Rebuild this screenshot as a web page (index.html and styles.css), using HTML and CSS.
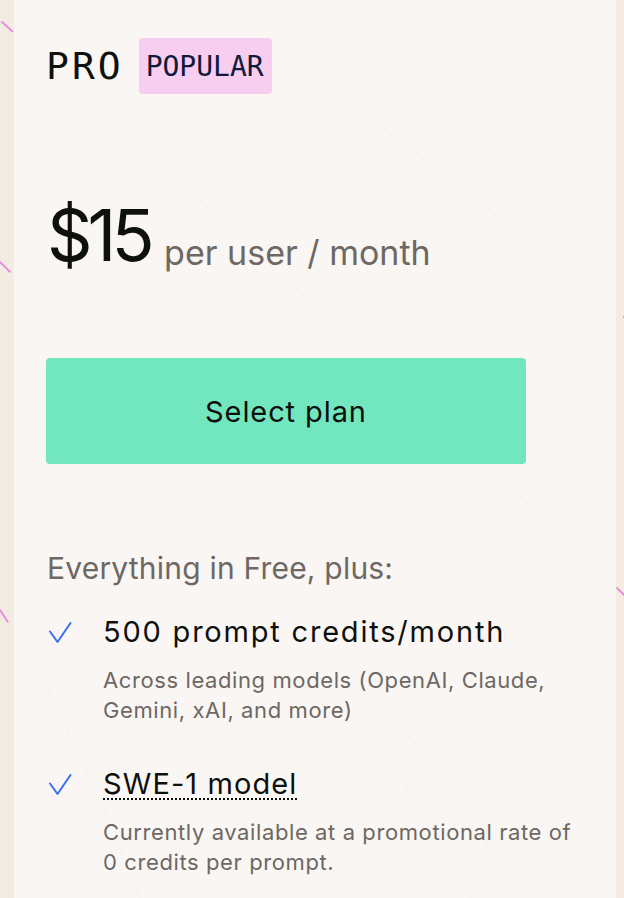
FILE: index.html
```html
<!DOCTYPE html>
<html lang="en">
<head>
<meta charset="utf-8">
<title>Pro plan</title>
<link rel="stylesheet" href="styles.css">
</head>
<body>
<div class="page">
  <svg class="deco" width="624" height="898" viewBox="0 0 624 898" aria-hidden="true">
    <g stroke="#e98ee0" stroke-width="2" stroke-linecap="round" fill="none" stroke-dasharray="14 30">
      <path d="M2 22 C 200 200, 420 400, 640 610"/>
      <path d="M205 -4 C 300 70, 420 150, 640 330"/>
      <path d="M0 262 C 120 380, 260 520, 470 898"/>
      <path d="M0 610 C 60 700, 100 800, 140 898"/>
      <path d="M380 700 C 430 760, 480 830, 520 898"/>
    </g>
  </svg>
  <main class="card">
    <header class="plan-head">
      <h2 class="plan-name">PRO</h2>
      <span class="badge">POPULAR</span>
    </header>
    <div class="price-row">
      <span class="price">$15</span>
      <span class="per">per user / month</span>
    </div>
    <button class="select-btn" type="button">Select plan</button>
    <p class="intro">Everything in Free, plus:</p>
    <ul class="features">
      <li class="feature">
        <svg class="check" width="24" height="22" viewBox="0 0 24 22" aria-hidden="true"><path d="M2 9.5 L9.5 20 L22.5 1" fill="none" stroke="#3a6ff6" stroke-width="2" stroke-linecap="round" stroke-linejoin="round"/></svg>
        <div class="feature-body">
          <div class="feature-title">500 prompt credits/month</div>
          <div class="feature-desc">Across leading models (OpenAI, Claude, Gemini, xAI, and more)</div>
        </div>
      </li>
      <li class="feature">
        <svg class="check" width="24" height="22" viewBox="0 0 24 22" aria-hidden="true"><path d="M2 9.5 L9.5 20 L22.5 1" fill="none" stroke="#3a6ff6" stroke-width="2" stroke-linecap="round" stroke-linejoin="round"/></svg>
        <div class="feature-body">
          <div class="feature-title"><span class="dotted">SWE-1 model</span></div>
          <div class="feature-desc">Currently available at a promotional rate of 0 credits per prompt.</div>
        </div>
      </li>
    </ul>
  </main>
</div>
</body>
</html>
```

FILE: styles.css
```css
* { box-sizing: border-box; }
html, body { margin: 0; padding: 0; }
body {
  background: #f4ece0;
  font-family: "Inter", "DejaVu Sans", sans-serif;
  color: #0e100d;
  width: 624px;
  height: 898px;
  overflow: hidden;
}
.page {
  position: relative;
  width: 624px;
  height: 898px;
}
.deco {
  position: absolute;
  left: 0;
  top: 0;
  z-index: 0;
}
.card {
  position: relative;
  z-index: 1;
  margin-left: 14px;
  width: 602px;
  height: 898px;
  background: rgba(250, 247, 243, 0.95);
  padding: 38px 0 0 33px;
}
.plan-head {
  display: flex;
  align-items: center;
  gap: 15px;
  height: 56px;
}
.plan-name {
  margin: 0;
  font-family: "DejaVu Sans Mono", monospace;
  font-weight: 400;
  font-size: 38px;
  letter-spacing: 3px;
  line-height: 1;
  color: #0e110e;
  margin-left: -1px;
}
.badge {
  display: flex;
  align-items: center;
  height: 56px;
  width: 133px;
  padding-left: 7px;
  background: #f7cdf0;
  border-radius: 4px;
  font-family: "DejaVu Sans Mono", monospace;
  font-size: 28px;
  color: #101a3a;
}
.price-row {
  margin-top: 105px;
  height: 73px;
  line-height: 73px;
  white-space: nowrap;
}
.price {
  font-size: 71px;
  letter-spacing: -5px;
  color: #0e100d;
  margin-right: 10px;
}
.per {
  font-size: 34px;
  vertical-align: -4px;
  color: #6d6864;
}
.select-btn {
  display: block;
  margin-top: 86px;
  margin-left: -1px;
  width: 480px;
  height: 106px;
  border: 0;
  border-radius: 4px;
  background: #72e6be;
  font-family: inherit;
  font-size: 29px;
  letter-spacing: 0.9px;
  color: #0e100d;
  padding: 0;
}
.intro {
  margin: 89px 0 0;
  font-size: 30px;
  letter-spacing: 0.2px;
  line-height: 30px;
  color: #6d6864;
}
.features {
  list-style: none;
  margin: 34px 0 0;
  padding: 0;
  display: flex;
  flex-direction: column;
  gap: 44px;
}
.feature {
  display: flex;
  gap: 31px;
}
.check {
  flex: none;
  margin-top: 5px;
  margin-left: 1px;
}
.feature-title {
  font-size: 29px;
  letter-spacing: 1.8px;
  line-height: 30px;
  color: #0e100d;
}
.dotted {
  letter-spacing: 1.1px;
  text-decoration: underline dotted #0e100d;
  text-decoration-thickness: 2px;
  text-underline-offset: 4px;
}
.feature-desc {
  margin-top: 18px;
  font-size: 22px;
  letter-spacing: 0.6px;
  line-height: 30px;
  color: #6d6864;
  max-width: 484px;
}
```
